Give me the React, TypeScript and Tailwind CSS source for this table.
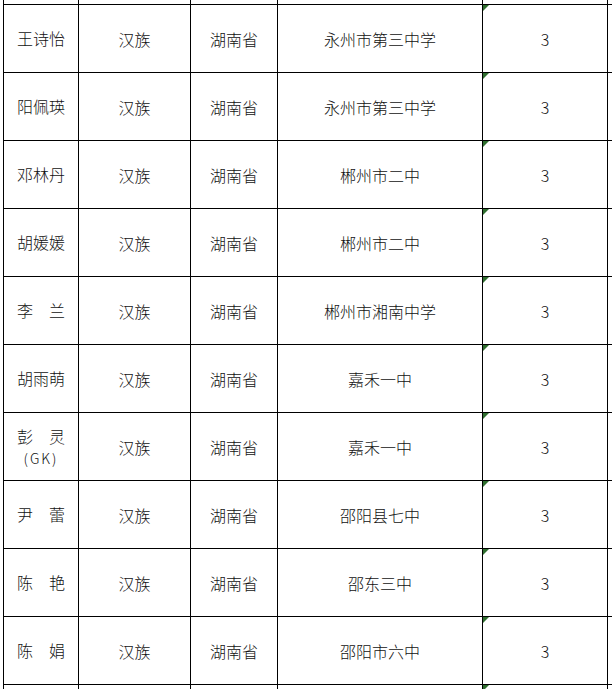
import React from 'react';

type Row = { name: string; sub?: string; nation: string; province: string; school: string; score: string };

const rows: Row[] = [
  { name: '王诗怡', nation: '汉族', province: '湖南省', school: '永州市第三中学', score: '3' },
  { name: '阳佩瑛', nation: '汉族', province: '湖南省', school: '永州市第三中学', score: '3' },
  { name: '邓林丹', nation: '汉族', province: '湖南省', school: '郴州市二中', score: '3' },
  { name: '胡媛媛', nation: '汉族', province: '湖南省', school: '郴州市二中', score: '3' },
  { name: '李　兰', nation: '汉族', province: '湖南省', school: '郴州市湘南中学', score: '3' },
  { name: '胡雨萌', nation: '汉族', province: '湖南省', school: '嘉禾一中', score: '3' },
  { name: '彭　灵', sub: '(GK)', nation: '汉族', province: '湖南省', school: '嘉禾一中', score: '3' },
  { name: '尹　蕾', nation: '汉族', province: '湖南省', school: '邵阳县七中', score: '3' },
  { name: '陈　艳', nation: '汉族', province: '湖南省', school: '邵东三中', score: '3' },
  { name: '陈　娟', nation: '汉族', province: '湖南省', school: '邵阳市六中', score: '3' },
];

const cell = 'flex shrink-0 items-center justify-center border-r border-black';

// little green "number stored as text" marker, top-left of the score cells
const Flag = () => (
  <svg className="absolute left-0 top-0" width="6" height="6" viewBox="0 0 6 6">
    <polygon points="0,0 6,0 0,6" fill="#2f6e2f" />
  </svg>
);

const TableRow: React.FC<{ row?: Row; h: string }> = ({ row, h }) => (
  <div className={`flex border-b border-black ${h}`}>
    <div className={`${cell} w-[76px] border-l`}>
      {row && (
        <div className="flex flex-col items-center">
          <div className="leading-[23px]">{row.name}</div>
          {row.sub && <div className="text-[14px] leading-[20px] tracking-[2px]">{row.sub}</div>}
        </div>
      )}
    </div>
    <div className={`${cell} w-[112px]`}>{row?.nation}</div>
    <div className={`${cell} w-[87px]`}>{row?.province}</div>
    <div className={`${cell} w-[205px]`}>{row?.school}</div>
    <div className={`${cell} relative w-[125px]`}>
      {row && <Flag />}
      {row?.score}
    </div>
    <div className={`${cell} w-[60px]`} />
  </div>
);

const App: React.FC = () => {
  return (
    <div className="h-[689px] w-[612px] overflow-hidden bg-white pl-[3px] font-['Noto_Sans_CJK_SC',sans-serif] text-[16px] font-light text-[#111]">
      <TableRow h="h-[5px]" />
      {rows.map((r, i) => (
        <TableRow key={i} row={r} h="h-[68px]" />
      ))}
      <div className="flex h-[20px]">
        <div className="w-[76px] shrink-0 border-x border-black" />
        <div className="w-[112px] shrink-0 border-r border-black" />
        <div className="w-[87px] shrink-0 border-r border-black" />
        <div className="w-[205px] shrink-0 border-r border-black" />
        <div className="relative w-[125px] shrink-0 border-r border-black">
          <Flag />
        </div>
      </div>
    </div>
  );
};

export default App;
